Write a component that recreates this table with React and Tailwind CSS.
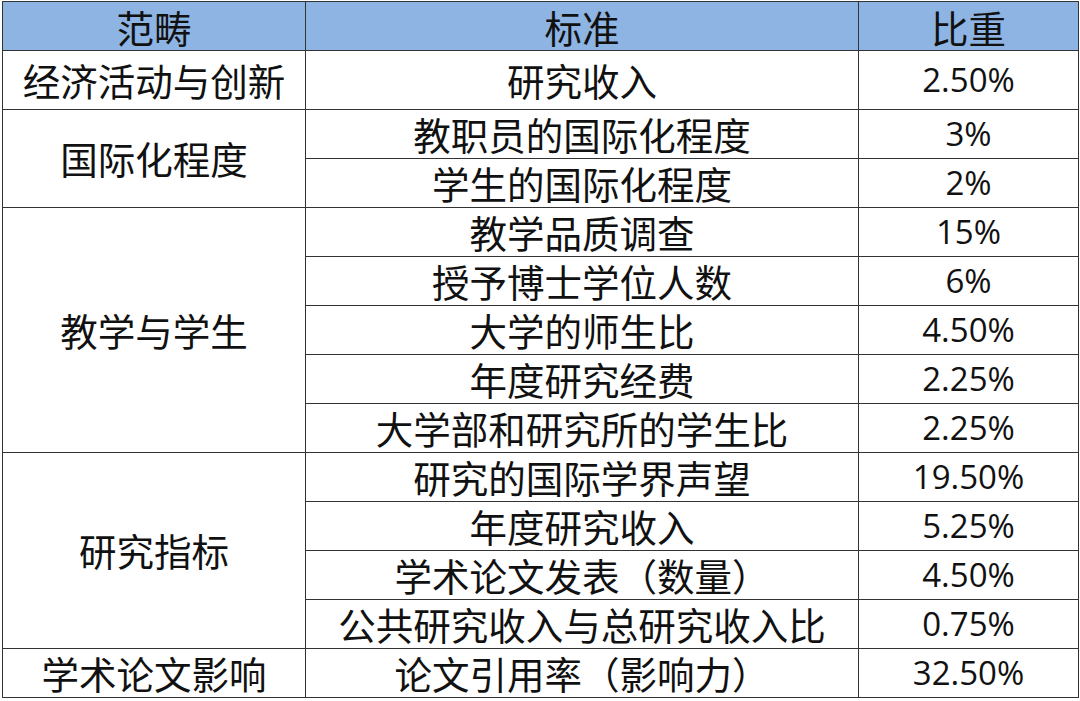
const rows = [
  { cat: '经济活动与创新', span: 1, items: [['研究收入', '2.50%']], tall: true },
  { cat: '国际化程度', span: 2, items: [['教职员的国际化程度', '3%'], ['学生的国际化程度', '2%']] },
  {
    cat: '教学与学生',
    span: 5,
    items: [
      ['教学品质调查', '15%'],
      ['授予博士学位人数', '6%'],
      ['大学的师生比', '4.50%'],
      ['年度研究经费', '2.25%'],
      ['大学部和研究所的学生比', '2.25%'],
    ],
  },
  {
    cat: '研究指标',
    span: 4,
    items: [
      ['研究的国际学界声望', '19.50%'],
      ['年度研究收入', '5.25%'],
      ['学术论文发表（数量）', '4.50%'],
      ['公共研究收入与总研究收入比', '0.75%'],
    ],
  },
  { cat: '学术论文影响', span: 1, items: [['论文引用率（影响力）', '32.50%']] },
]

const cjk = "font-['Noto_Sans_CJK_SC',sans-serif]"
const num = "font-['Open_Sans','Noto_Sans',sans-serif]"

export default function App() {
  return (
    <div className="w-[1080px] h-[701px] bg-white pt-px pl-[2px] overflow-hidden">
      <table className="border-collapse table-fixed text-[#111] text-[37.5px] leading-[1.2]">
        <colgroup>
          <col className="w-[303px]" />
          <col className="w-[553px]" />
          <col className="w-[220px]" />
        </colgroup>
        <thead>
          <tr className="h-[49px] bg-[#8eb4e3]">
            <th className={`border border-[#333] font-normal p-0 ${cjk}`}>范畴</th>
            <th className={`border border-[#333] font-normal p-0 ${cjk}`}>标准</th>
            <th className={`border border-[#333] font-normal p-0 ${cjk}`}>比重</th>
          </tr>
        </thead>
        <tbody>
          {rows.map((g) =>
            g.items.map(([name, pct], i) => (
              <tr key={name} className={g.tall ? 'h-[59px]' : 'h-[49px]'}>
                {i === 0 && (
                  <td rowSpan={g.span} className={`border border-[#333] text-center p-0 pb-[2px] ${cjk}`}>
                    {g.cat}
                  </td>
                )}
                <td className={`border border-[#333] text-center p-0 pb-[2px] ${cjk}`}>{name}</td>
                <td className={`border border-[#333] text-center p-0 text-[33px] ${num}`}>{pct}</td>
              </tr>
            ))
          )}
        </tbody>
      </table>
    </div>
  )
}
